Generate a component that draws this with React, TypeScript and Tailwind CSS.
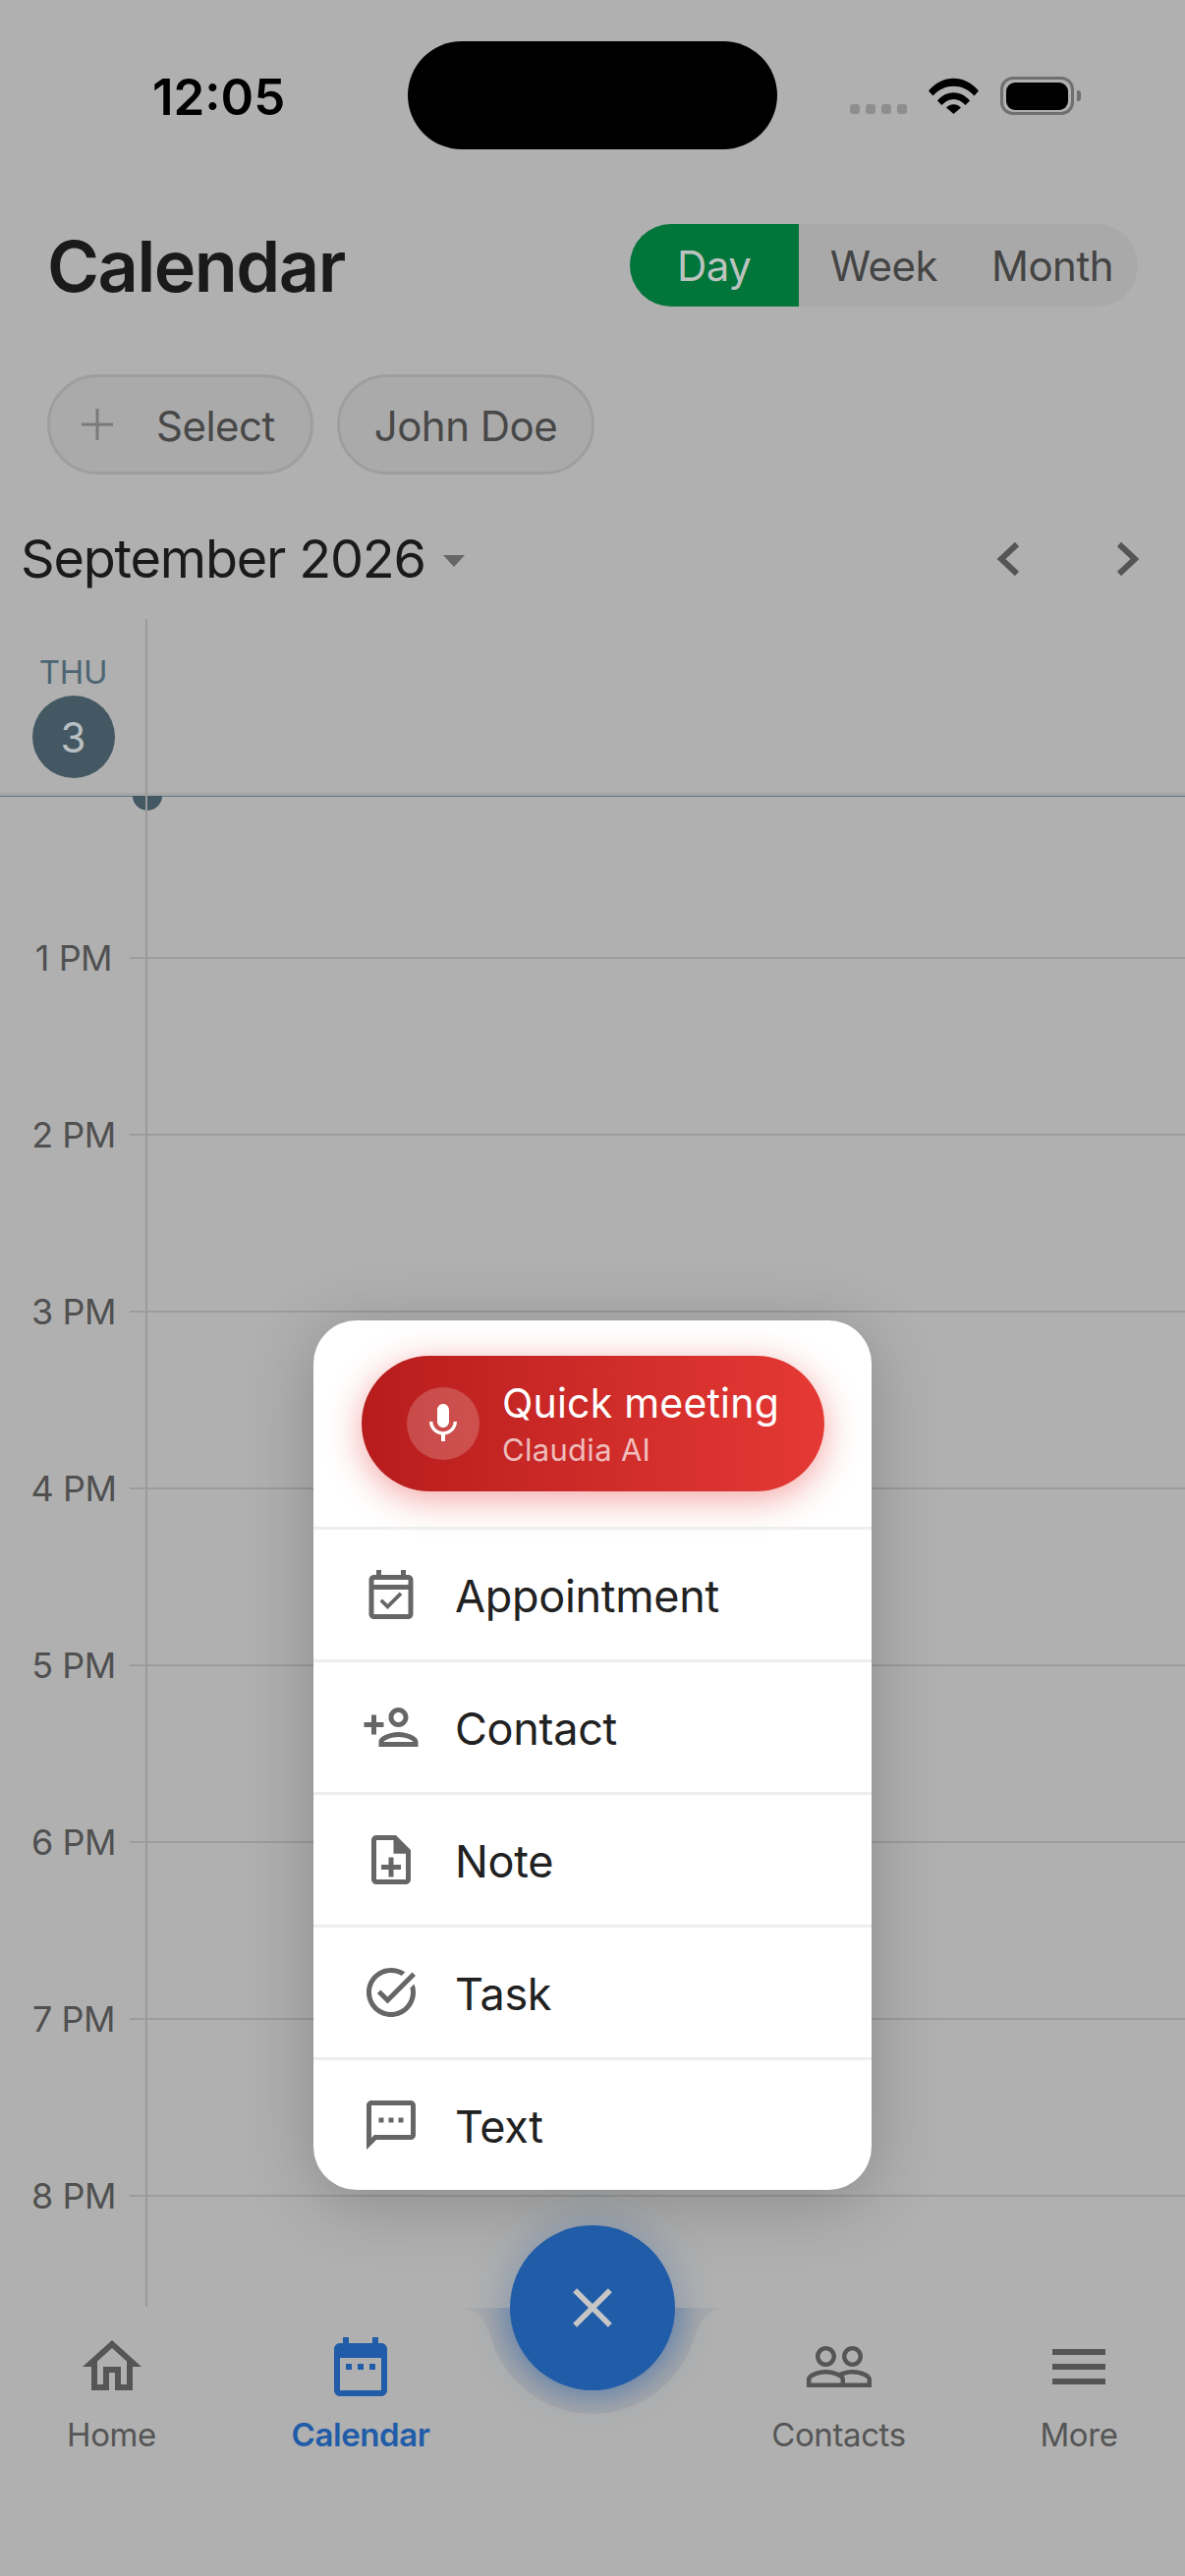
const hours = ['1 PM', '2 PM', '3 PM', '4 PM', '5 PM', '6 PM', '7 PM', '8 PM'];

const menuItems = [
  {
    label: 'Appointment',
    d: 'M19 4h-1V2h-2v2H8V2H6v2H5c-1.11 0-1.99.9-1.99 2L3 20c0 1.1.89 2 2 2h14c1.1 0 2-.9 2-2V6c0-1.1-.9-2-2-2zm0 16H5V10h14v10zm0-12H5V6h14v2zm-2.47 4.06l-1.06-1.06-4.88 4.88-2.12-2.12-1.06 1.06L10.59 18l5.94-5.94z',
  },
  {
    label: 'Contact',
    d: 'M15 12c2.21 0 4-1.79 4-4s-1.79-4-4-4-4 1.79-4 4 1.79 4 4 4zm0-6c1.1 0 2 .9 2 2s-.9 2-2 2-2-.9-2-2 .9-2 2-2zm0 8c-2.67 0-8 1.34-8 4v2h16v-2c0-2.66-5.33-4-8-4zm-6 4c.22-.72 3.31-2 6-2 2.7 0 5.8 1.29 6 2H9zm-3-3v-3h3v-2H6V7H4v3H1v2h3v3h2z',
  },
  {
    label: 'Note',
    d: 'M13 11h-2v3H8v2h3v3h2v-3h3v-2h-3zm1-9H6c-1.1 0-2 .9-2 2v16c0 1.1.89 2 1.99 2H18c1.1 0 2-.9 2-2V8l-6-6zm4 18H6V4h7v5.5h5V20z',
  },
  {
    label: 'Task',
    d: 'M22 5.18L10.59 16.6l-4.24-4.24 1.41-1.41 2.83 2.83 10-10L22 5.18zm-2.21 5.04c.13.57.21 1.17.21 1.78 0 4.42-3.58 8-8 8s-8-3.58-8-8 3.58-8 8-8c1.58 0 3.04.46 4.28 1.22l1.44-1.44C16.1 2.67 14.13 2 12 2 6.48 2 2 6.48 2 12s4.48 10 10 10 10-4.48 10-10c0-1.19-.22-2.33-.6-3.39l-1.61 1.61z',
  },
  {
    label: 'Text',
    d: 'M20 2H4c-1.1 0-1.99.9-1.99 2L2 22l4-4h14c1.1 0 2-.9 2-2V4c0-1.1-.9-2-2-2zm0 14H5.17L4 17.17V4h16v12zM7 9h2v2H7zm4 0h2v2h-2zm4 0h2v2h-2z',
  },
];

function MaterialIcon({ d, className }: { d: string; className: string }) {
  return (
    <svg viewBox="0 0 24 24" fill="currentColor" className={className}>
      <path d={d} />
    </svg>
  );
}

function StatusBar() {
  return (
    <div className="flex h-[152px] shrink-0 items-start pt-[42px]">
      <div className="ml-[155px] mt-[31px] w-[135px] text-[51px] font-semibold leading-[52px] text-black">12:05</div>
      <div className="ml-[125px] h-[110px] w-[376px] rounded-[55px] bg-black" />
      <div className="ml-[74px] mt-[64px] flex gap-[6px]">
        <div className="h-[10px] w-[10px] rounded-[3px] bg-[#8e8e8e]" />
        <div className="h-[10px] w-[10px] rounded-[3px] bg-[#8e8e8e]" />
        <div className="h-[10px] w-[10px] rounded-[3px] bg-[#8e8e8e]" />
        <div className="h-[10px] w-[10px] rounded-[3px] bg-[#8e8e8e]" />
      </div>
      <svg viewBox="0 0 51 37" className="ml-[22px] mt-[37px] h-[37px] w-[51px]">
        <path d="M0 13.5C14 -3.5 37 -3.5 51 13.5L46.5 18.5C35 5.5 16 5.5 4.5 18.5z" fill="#000" />
        <path d="M9 23.5C18 12.5 33 12.5 42 23.5L37.5 28C30.5 20 20.5 20 13.5 28z" fill="#000" />
        <path d="M18 30.5C22 26 29 26 33 30.5L25.5 37z" fill="#000" />
      </svg>
      <div className="ml-[22px] mt-[36px] flex items-center">
        <div className="flex h-[39px] w-[75px] items-center justify-center rounded-[13px] border-[3px] border-[#707070]">
          <div className="h-[28px] w-[63px] rounded-[9px] bg-black" />
        </div>
        <div className="ml-[3px] h-[11px] w-[4px] rounded-r-[3px] bg-[#707070]" />
      </div>
    </div>
  );
}

function Header() {
  return (
    <div className="mt-[76px] flex h-[84px] shrink-0 items-center justify-between pl-[48px] pr-[48px]">
      <h1 className="pt-[2px] text-[72px] font-semibold leading-none tracking-[-1.5px] text-[#1a1a1a]">Calendar</h1>
      <div className="flex h-[84px] items-center overflow-hidden rounded-[42px] bg-[#a9a9a9] text-[42px] leading-none tracking-[-0.5px] text-[#444444]">
        <div className="flex h-full w-[172px] items-center justify-center bg-[#02753b] pt-[2px] text-[#bcc3bf]">Day</div>
        <div className="pl-[32px] pr-[26px] pt-[2px]">Week</div>
        <div className="pl-[29px] pr-[25px] pt-[2px]">Month</div>
      </div>
    </div>
  );
}

function Chips() {
  return (
    <div className="mt-[69px] flex shrink-0 gap-[24px] pl-[48px] text-[42px] leading-none tracking-[-0.5px] text-[#484848]">
      <div className="flex h-[102px] w-[271px] items-center rounded-[51px] border-[3px] border-[#9e9e9e] bg-[#aaaaaa] pl-[32px]">
        <svg viewBox="0 0 32 32" className="h-[32px] w-[32px] text-[#7a7a7a]" fill="currentColor">
          <path d="M14.5 0h3v14.5H32v3H17.5V32h-3V17.5H0v-3h14.5z" />
        </svg>
        <span className="ml-[44px] pt-[4px]">Select</span>
      </div>
      <div className="flex h-[102px] w-[262px] items-center justify-center rounded-[51px] border-[3px] border-[#9e9e9e] bg-[#aaaaaa] pt-[4px]">John Doe</div>
    </div>
  );
}

function MonthRow() {
  return (
    <div className="flex h-[147px] shrink-0 items-center pl-[21px] pt-[24px]">
      <span className="text-[54px] leading-none tracking-[-1.2px] text-[#1a1a1a]">September 2026</span>
      <svg viewBox="0 0 22 12" className="ml-[18px] mt-[4px] h-[12px] w-[22px]">
        <path d="M0 0h22L11 12z" fill="#666666" />
      </svg>
      <svg viewBox="0 0 24 36" fill="none" className="ml-[541px] h-[36px] w-[24px] stroke-[#555555] stroke-[6]">
        <path d="M21 3L5 18l16 15" />
      </svg>
      <svg viewBox="0 0 24 36" fill="none" className="ml-[98px] h-[36px] w-[24px] stroke-[#555555] stroke-[6]">
        <path d="M3 3l16 15L3 33" />
      </svg>
    </div>
  );
}

function DayHeader() {
  return (
    <div className="flex h-[180px] shrink-0 border-b-[3px] border-[#a6a6a6]">
      <div className="flex w-[149px] flex-col items-center pt-[38px]">
        <span className="text-[33px] leading-[33px] tracking-[-0.3px] text-[#4d6673]">THU</span>
        <div className="mt-[7px] flex h-[84px] w-[84px] items-center justify-center rounded-full bg-[#435862] pt-[2px] text-[42px] leading-none text-[#b8bfc2]">3</div>
      </div>
    </div>
  );
}

function HourGrid() {
  return (
    <div className="relative min-h-0 flex-1 overflow-hidden">
      <div className="h-[1px] bg-[#5d7782]" />
      <div className="absolute left-[135px] top-[-15px] h-[30px] w-[30px] rounded-full bg-[#435862]" />
      <div className="h-[163px]" />
      {hours.map((hour) => (
        <div key={hour} className="flex h-[180px] items-start">
          <span className="-mr-[18px] w-[150px] -translate-y-1/2 pt-[2px] text-center text-[36px] leading-none tracking-[-0.5px] text-[#505050]">{hour}</span>
          <div className="h-[2px] flex-1 bg-[#9c9c9c]" />
        </div>
      ))}
    </div>
  );
}

function NavItem({ label, active, className, children }: { label: string; active?: boolean; className: string; children: React.ReactNode }) {
  return (
    <div className={`flex flex-col items-center ${className}`}>
      {children}
      <span className={`mt-[13px] text-[33px] leading-[40px] tracking-[-0.4px] ${active ? 'font-semibold text-[#205ca8]' : 'text-[#555555]'}`}>{label}</span>
    </div>
  );
}

function BottomNav() {
  return (
    <div className="flex h-[273px] shrink-0 bg-[#b0b0b0] pt-[24px]">
      <NavItem label="Home" className="w-[227px]">
        <MaterialIcon className="h-[72px] w-[72px] text-[#555555]" d="M12 5.69l5 4.5V18h-2v-6H9v6H7v-7.81l5-4.5M12 3L2 12h3v8h6v-6h2v6h6v-8h3L12 3z" />
      </NavItem>
      <NavItem label="Calendar" active className="w-[280px]">
        <MaterialIcon className="h-[72px] w-[72px] text-[#205ca8]" d="M19 4h-1V2h-2v2H8V2H6v2H5c-1.1 0-2 .9-2 2v14c0 1.1.9 2 2 2h14c1.1 0 2-.9 2-2V6c0-1.1-.9-2-2-2zm0 16H5V9h14v11zM7 11h2v2H7zm4 0h2v2h-2zm4 0h2v2h-2z" />
      </NavItem>
      <div className="w-[200px]" />
      <NavItem label="Contacts" className="w-[293px]">
        <MaterialIcon className="h-[72px] w-[72px] text-[#555555]" d="M16.5 13c-1.2 0-3.07.34-4.5 1-1.43-.67-3.3-1-4.5-1C5.33 13 1 14.08 1 16.25V19h22v-2.75c0-2.17-4.33-3.25-6.5-3.25zm-4 4.5h-10v-1.25c0-.54 2.56-1.75 5-1.75s5 1.21 5 1.75v1.25zm9 0H14v-1.25c0-.46-.2-.86-.52-1.22.88-.3 1.96-.53 3.02-.53 2.44 0 5 1.21 5 1.75v1.25zM7.5 12c1.93 0 3.5-1.57 3.5-3.5S9.43 5 7.5 5 4 6.57 4 8.5 5.57 12 7.5 12zm0-5.5c1.1 0 2 .9 2 2s-.9 2-2 2-2-.9-2-2 .9-2 2-2zm9 5.5c1.93 0 3.5-1.57 3.5-3.5S18.43 5 16.5 5 13 6.57 13 8.5s1.57 3.5 3.5 3.5zm0-5.5c1.1 0 2 .9 2 2s-.9 2-2 2-2-.9-2-2 .9-2 2-2z" />
      </NavItem>
      <NavItem label="More" className="w-[196px]">
        <MaterialIcon className="h-[72px] w-[72px] text-[#555555]" d="M3 18h18v-2H3v2zm0-5h18v-2H3v2zm0-7v2h18V6H3z" />
      </NavItem>
    </div>
  );
}

function Fab() {
  return (
    <>
      {/* notch cut into the nav bar under the button */}
      <svg viewBox="0 0 300 112" className="absolute left-[453px] top-[2349px] h-[112px] w-[300px]">
        <defs>
          <radialGradient id="bowl" gradientUnits="userSpaceOnUse" cx="150" cy="0" r="150">
            <stop offset="0.56" stopColor="#2a5ca0" stopOpacity="0.28" />
            <stop offset="0.72" stopColor="#5f6f8c" stopOpacity="0.14" />
            <stop offset="1" stopColor="#5f6f8c" stopOpacity="0" />
          </radialGradient>
        </defs>
        <path d="M0 0C26 0 37 2 45.7 28A108 108 0 0 0 254.3 28C263 2 274 0 300 0z" fill="url(#bowl)" />
      </svg>
      <div className="absolute left-[519px] top-[2265px] flex h-[168px] w-[168px] items-center justify-center rounded-full bg-[#205ca8] shadow-[0_0_40px_rgba(32,92,168,0.35)]">
        <MaterialIcon className="h-[68px] w-[68px] text-[#c6c6c6]" d="M19 6.41L17.59 5 12 10.59 6.41 5 5 6.41 10.59 12 5 17.59 6.41 19 12 13.41 17.59 19 19 17.59 13.41 12z" />
      </div>
    </>
  );
}

function CreateMenu() {
  return (
    <div className="absolute left-[319px] top-[1344px] w-[568px] rounded-[44px] bg-white shadow-[0_12px_70px_rgba(0,0,0,0.22)]">
      <div className="h-[210px] pl-[49px] pt-[36px]">
        <div className="flex h-[138px] w-[471px] items-center rounded-[69px] bg-gradient-to-r from-[#b71c1c] to-[#e53935] pl-[46px] shadow-[0_8px_36px_rgba(229,57,53,0.45)]">
          <div className="flex h-[74px] w-[74px] items-center justify-center rounded-full bg-white/20">
            <MaterialIcon className="h-[48px] w-[48px] text-white" d="M12 14c1.66 0 3-1.34 3-3V5c0-1.66-1.34-3-3-3S9 3.34 9 5v6c0 1.66 1.34 3 3 3zm5.3-3c0 3-2.54 5.1-5.3 5.1S6.7 14 6.7 11H5c0 3.41 2.72 6.23 6 6.72V21h2v-3.28c3.28-.48 6-3.3 6-6.72h-1.7z" />
          </div>
          <div className="ml-[23px] flex flex-col gap-[6px] pb-[1px]">
            <span className="text-[41px] font-normal leading-[48px] tracking-[0.2px] text-white">Quick meeting</span>
            <span className="text-[31px] leading-[36px] tracking-[0.3px] text-white/70">Claudia AI</span>
          </div>
        </div>
      </div>
      {menuItems.map((item) => (
        <div key={item.label} className="flex h-[135px] items-center border-t-[3px] border-[#eeeeee] pl-[49px]">
          <MaterialIcon className="h-[60px] w-[60px] text-[#666666]" d={item.d} />
          <span className="ml-[35px] pt-[2px] text-[45px] leading-none tracking-[-0.3px] text-[#212121]">{item.label}</span>
        </div>
      ))}
    </div>
  );
}

export default function App() {
  return (
    <div className="relative flex h-[2622px] w-[1206px] flex-col overflow-hidden bg-[#b0b0b0] font-['Inter',sans-serif]">
      <StatusBar />
      <Header />
      <Chips />
      <MonthRow />
      <DayHeader />
      <HourGrid />
      <BottomNav />
      {/* vertical rule of the day column */}
      <div className="absolute left-[148px] top-[630px] h-[1718px] w-[2px] bg-[#9a9a9a]" />
      <CreateMenu />
      <Fab />
    </div>
  );
}
